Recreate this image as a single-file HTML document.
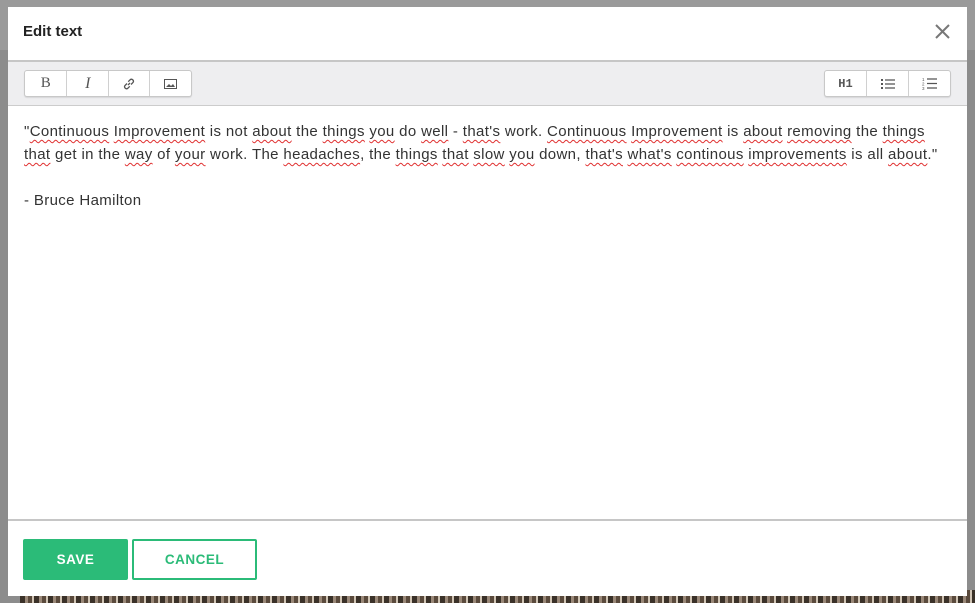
<!DOCTYPE html>
<html><head><style>
body{margin:0;width:975px;height:603px;overflow:hidden;background:#8c8c8c;font-family:"Liberation Sans",sans-serif;position:relative}
.top{position:absolute;left:0;top:0;width:975px;height:50px;background:#9a9a9a}
.photo{position:absolute;left:20px;top:590px;width:955px;height:13px;background:repeating-linear-gradient(90deg,#3a3128 0 5px,#9a8878 5px 8px,#5a4a3c 8px 12px,#d0c4b4 12px 14px)}
.modal{position:absolute;left:8px;top:7px;width:959px;height:589px;background:#fff}
.hdr{height:53px;border-bottom:2px solid #c6c6c6;position:relative}
.hdr h1{margin:0;position:absolute;left:15px;top:16px;font-size:15px;font-weight:bold;color:#222}
.x{position:absolute;right:16px;top:16px}
.tb{height:43px;background:#eeeef0;border-bottom:1px solid #ccc;position:relative}
.grp{position:absolute;top:8px;height:25px;border:1px solid #c8c8c8;border-radius:3px;background:#fff;display:flex;box-shadow:0 1px 1px rgba(0,0,0,.1)}
.grp div{border-right:1px solid #d0d0d0;display:flex;align-items:center;justify-content:center;color:#555;font-size:14px}
.grp div:last-child{border-right:none}
.content{height:415px;border-bottom:2px solid #c6c6c6;padding:14px 16px 0 16px;box-sizing:border-box;font-size:15px;line-height:23px;color:#333;letter-spacing:0.36px;white-space:nowrap}
.content u{text-decoration:underline wavy #e03030;text-decoration-thickness:1px;text-underline-offset:3px}
.btn{position:absolute;top:532px;height:41px;box-sizing:border-box;border-radius:2px;font-weight:bold;font-size:13.5px;letter-spacing:.5px;display:flex;align-items:center;justify-content:center}
</style></head><body>
<div class="top"></div><div class="photo"></div>
<div class="modal">
<div class="hdr"><h1>Edit text</h1>
<svg class="x" width="17" height="17" viewBox="0 0 17 17"><path d="M2 2L15 15M15 2L2 15" stroke="#777" stroke-width="2"/></svg></div>
<div class="tb">
<div class="grp" style="left:16px;width:166px">
<div style="width:42px;font-family:'Liberation Serif',serif;font-size:15px">B</div>
<div style="width:41px;font-family:'Liberation Serif',serif;font-style:italic;font-size:16px">I</div>
<div style="width:41px"><svg width="14" height="14" viewBox="0 0 14 14"><path d="M6 8L8 6M5 6.5L3 8.5a2 2 0 0 0 2.8 2.8L7.8 9.3M9 7.5l2-2A2 2 0 0 0 8.2 2.7L6.2 4.7" fill="none" stroke="#555" stroke-width="1.3"/></svg></div>
<div style="width:41px"><svg width="13" height="10" viewBox="0 0 13 10"><rect x=".5" y=".5" width="12" height="9" fill="none" stroke="#555"/><path d="M2 8l3-3 2 2 2-2 2 3z" fill="#555"/></svg></div>
</div>
<div class="grp" style="right:16px;width:125px">
<div style="width:41px;font-family:'Liberation Mono',monospace;font-size:12px;font-weight:bold">H1</div>
<div style="width:41px"><svg width="16" height="12" viewBox="0 0 16 12"><path d="M1 1h2v2H1zM1 5h2v2H1zM1 9h2v2H1z" fill="#555"/><path d="M5 2h10M5 6h10M5 10h10" stroke="#555" stroke-width="1.3"/></svg></div>
<div style="width:41px"><svg width="16" height="13" viewBox="0 0 16 13"><text x="0" y="4" font-size="4.5" fill="#555">1</text><text x="0" y="8.5" font-size="4.5" fill="#555">2</text><text x="0" y="13" font-size="4.5" fill="#555">3</text><path d="M5 2h10M5 6.5h10M5 11h10" stroke="#555" stroke-width="1.3"/></svg></div>
</div>
</div>
<div class="content">"<u>Continuous</u> <u>Improvement</u> is not <u>about</u> the <u>things</u> <u>you</u> do <u>well</u> - <u>that's</u> work. <u>Continuous</u> <u>Improvement</u> is <u>about</u> <u>removing</u> the <u>things</u><br><u>that</u> get in the <u>way</u> of <u>your</u> work. The <u>headaches</u>, the <u>things</u> <u>that</u> <u>slow</u> <u>you</u> down, <u>that's</u> <u>what's</u> <u>continous</u> <u>improvements</u> is all <u>about</u>."<br><br>- Bruce Hamilton</div>
<div class="btn" style="left:15px;width:105px;background:#2bbb78;color:#fff">SAVE</div>
<div class="btn" style="left:124px;width:125px;border:2px solid #2bbb78;color:#2bbb78">CANCEL</div>
</div>
</body></html>
